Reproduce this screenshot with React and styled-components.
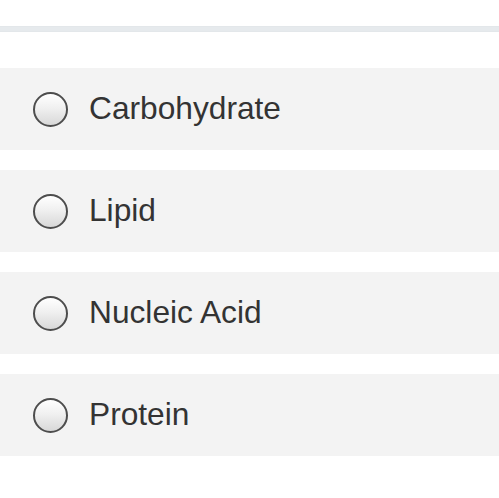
import React from "react";
import styled, { createGlobalStyle } from "styled-components";

const Global = createGlobalStyle`
  html, body { margin: 0; padding: 0; background: #ffffff; }
  body { font-family: "Liberation Sans", Arial, sans-serif; }
`;

const Page = styled.div`
  width: 499px;
  padding-top: 26px;
`;

const Divider = styled.div`
  height: 6px;
  background: #e6eaed;
  border-top: 1px solid #e3e7ea;
  border-bottom: 1px solid #e3e7ea;
  box-sizing: border-box;
  margin-bottom: 36px;
`;

const List = styled.div`
  display: flex;
  flex-direction: column;
  gap: 20px;
`;

const Option = styled.label`
  display: flex;
  align-items: center;
  height: 82px;
  background: #f3f3f3;
  padding-left: 33px;
  box-sizing: border-box;
  cursor: pointer;
`;

const Radio = styled.span`
  width: 35px;
  height: 35px;
  box-sizing: border-box;
  border-radius: 50%;
  border: 2px solid #4d4d4d;
  background: linear-gradient(to bottom, #ffffff 0%, #f0f0f0 45%, #d8d8d8 100%);
  flex-shrink: 0;
  margin-right: 21px;
`;

const Label = styled.span`
  font-size: 31.7px;
  color: #333333;
  line-height: 1;
`;

const options = ["Carbohydrate", "Lipid", "Nucleic Acid", "Protein"];

export default function App() {
  return (
    <Page>
      <Global />
      <Divider />
      <List>
        {options.map((o) => (
          <Option key={o}>
            <Radio />
            <Label>{o}</Label>
          </Option>
        ))}
      </List>
    </Page>
  );
}
